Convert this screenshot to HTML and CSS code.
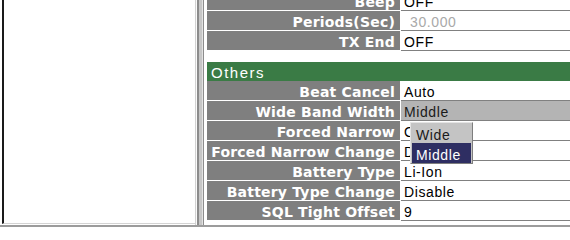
FILE: index.html
```html
<!DOCTYPE html>
<html>
<head>
<meta charset="utf-8">
<link rel="stylesheet" href="styles.css">
</head>
<body>
<div class="main">
  <div class="left"></div>
  <div class="splitter"></div>
  <div class="right">
    <div class="table">
      <div class="row"><div class="label">Beep</div><div class="value">OFF</div></div>
      <div class="row"><div class="label">Periods(Sec)</div><div class="value disabled">30.000</div></div>
      <div class="row"><div class="label">TX End</div><div class="value">OFF</div></div>
      <div class="gap"></div>
      <div class="header">Others</div>
      <div class="row"><div class="label">Beat Cancel</div><div class="value">Auto</div></div>
      <div class="row"><div class="label">Wide Band Width</div><div class="value selected">Middle</div></div>
      <div class="row"><div class="label">Forced Narrow</div><div class="value">OFF</div></div>
      <div class="row"><div class="label">Forced Narrow Change</div><div class="value">Disable</div></div>
      <div class="row"><div class="label">Battery Type</div><div class="value">Li-Ion</div></div>
      <div class="row"><div class="label">Battery Type Change</div><div class="value">Disable</div></div>
      <div class="row"><div class="label">SQL Tight Offset</div><div class="value">9</div></div>
    </div>
    <div class="dropdown">
      <div class="option">Wide</div>
      <div class="option active">Middle</div>
    </div>
  </div>
</div>
<div class="bottom"></div>
</body>
</html>
```
FILE: styles.css
```css
html, body {
  margin: 0;
  padding: 0;
  background: #fff;
}
body {
  width: 570px;
  height: 227px;
  overflow: hidden;
}
.main {
  display: flex;
  height: 225px;
}
.left {
  width: 193px;
  margin-left: 2px;
  box-sizing: border-box;
  height: 224px;
  border-left: 2px solid #1a1a1a;
  border-bottom: 1px solid #d4d4d4;
  background: #fff;
}
.splitter {
  width: 9px;
  flex: none;
  background: linear-gradient(to right,
    #d2d2d2 0 1px, #fafafa 1px 2px, #8c8c8c 2px 4px,
    #c6c6c6 4px 7px, #e2e2e2 7px 8px, #8c8c8c 8px 9px);
}
.right {
  flex: 1;
  position: relative;
  overflow: hidden;
  padding-left: 3px;
  background: #fff;
}
.table {
  margin-top: -9px;
}
.row {
  display: flex;
  height: 20px;
}
.label {
  width: 193px;
  flex: none;
  margin-right: 1px;
  box-sizing: border-box;
  height: 20px;
  background: #7f7f7f;
  border-bottom: 1px solid #fff;
  color: #fff;
  font-family: "DejaVu Sans", sans-serif;
  font-weight: bold;
  font-size: 14px;
  letter-spacing: 0.2px;
  text-align: right;
  padding: 3px 5px 0 0;
  line-height: 16px;
  white-space: nowrap;
}
.value {
  flex: 1;
  box-sizing: border-box;
  height: 20px;
  border-bottom: 1px solid #808080;
  color: #000;
  font-family: "Liberation Sans", Arial, sans-serif;
  font-size: 14px;
  letter-spacing: 0.6px;
  padding: 3px 0 0 3px;
  line-height: 16px;
  white-space: nowrap;
}
.value.disabled {
  color: #a9a9a9;
  padding-left: 9px;
}
.value.selected {
  background: #b4b4b4;
  color: #1a1a1a;
}
.gap {
  height: 11px;
}
.header {
  height: 19px;
  background: #3a7b45;
  color: #fff;
  font-family: "Liberation Sans", Arial, sans-serif;
  font-size: 15px;
  letter-spacing: 1.5px;
  padding: 2px 0 0 4px;
  box-sizing: border-box;
  line-height: 17px;
}
.dropdown {
  position: absolute;
  left: 206px;
  top: 122px;
  width: 63px;
  height: 42px;
  box-sizing: border-box;
  background: #c4c4c4;
  border: 1px solid;
  border-color: #e4e4e4 #7e7e7e #7e7e7e #e4e4e4;
  padding: 0 1px;
  font-family: "Liberation Sans", Arial, sans-serif;
  font-size: 14px;
  letter-spacing: 0.6px;
}
.option {
  height: 20px;
  line-height: 16px;
  padding: 4px 0 0 4px;
  box-sizing: border-box;
  color: #1a1a1a;
}
.option.active {
  background: #2e2e62;
  color: #fff;
}
.bottom {
  height: 2px;
  background: #9c9c9c;
}
```
